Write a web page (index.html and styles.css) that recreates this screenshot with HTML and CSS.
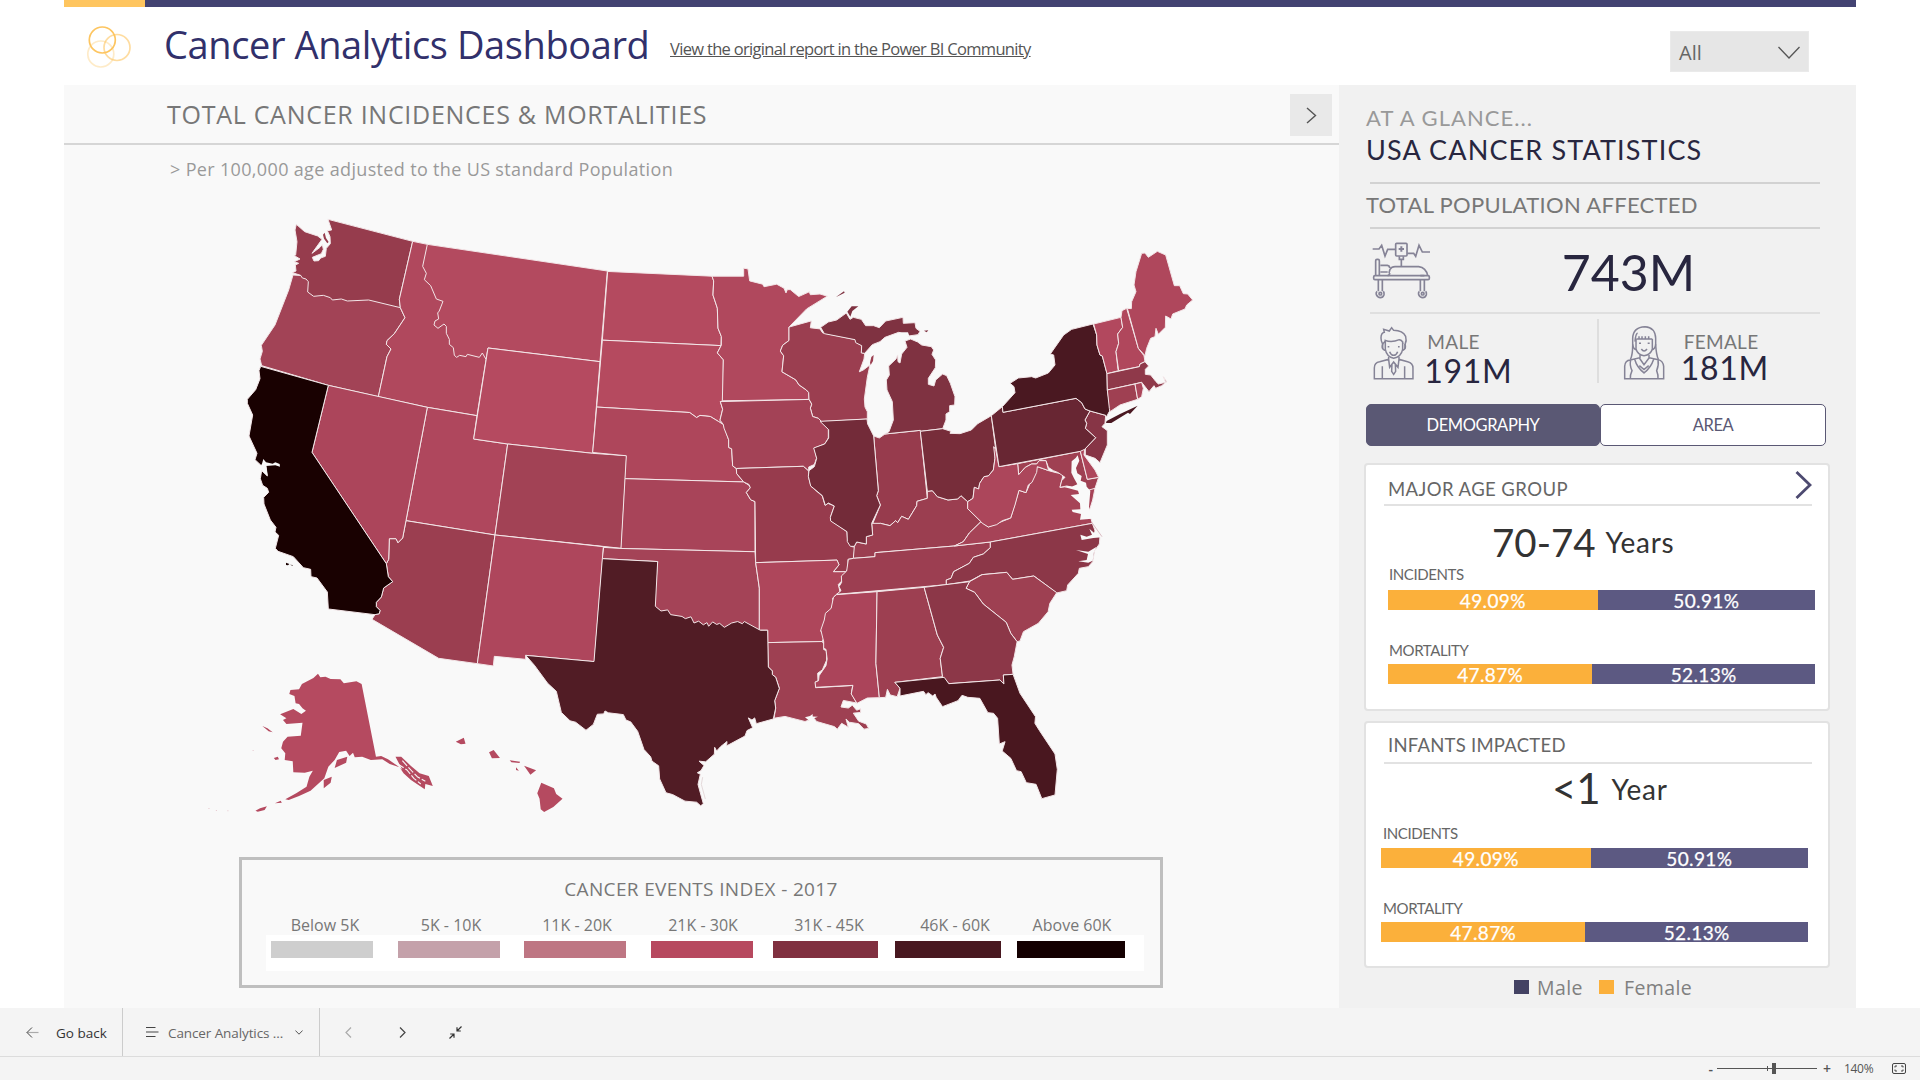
FILE: index.html
```html
<!DOCTYPE html>
<html lang="en">
<head>
<meta charset="utf-8">
<title>Cancer Analytics Dashboard</title>
<link rel="stylesheet" href="styles.css">
</head>
<body>
<div class="app">
  <div class="report">
    <div class="stripe"><span class="stripe-accent"></span></div>
    <header class="header">
      <svg class="logo" viewBox="0 0 46 58" fill="none" stroke="#fdc560" stroke-width="1.7">
        <circle cx="15.300" cy="15" r="13"/>
        <circle cx="30" cy="22.500" r="13" opacity=".6"/>
        <circle cx="13.800" cy="29" r="13" opacity=".35"/>
      </svg>
      <h1 class="title">Cancer Analytics Dashboard</h1>
      <a class="link">View the original report in the Power BI Community</a>
      <div class="select"><span>All</span>
        <svg width="22" height="13" viewBox="0 0 22 13" fill="none" stroke="#555" stroke-width="1.3"><path d="M.5 1 11 12 21.500 1"/></svg>
      </div>
    </header>
    <main class="main">
      <section class="map-panel">
        <div class="map-head">
          <h2>TOTAL CANCER INCIDENCES &amp; MORTALITIES</h2>
          <div class="next"><svg width="11" height="17" viewBox="0 0 11 17" fill="none" stroke="#555" stroke-width="1.4"><path d="M1 1 9.500 8.500 1 16"/></svg></div>
        </div>
        <p class="note">&gt; Per 100,000 age adjusted to the US standard Population</p>
        <svg class="map" viewBox="64 196 1275 650" stroke="#f3e6e8" stroke-width="1">
          <!-- west -->
          <g transform="translate(240 210) scale(.33333)">
            <path fill="#a24356" d="M159 195 240 200 470 270 481 293 495 323 463 371 441 392 439 403 453 417 441 440 415 560 265 526 65 467 60 447 67 424 64 406 105 345 146 240Z"/>
            <path fill="#963c4d" d="M264 28 518 94 478 268 481 293 386 270 322 273 304 267 277 270 271 263 250 256 221 259 203 246 205 215 198 207 187 204 182 196 157 188 168 183 166 165 176 160 163 155 180 147 163 137 167 135 171 95 165 60 169 43 194 65 233 78 246 88 216 130 240 112 247 104 250 118 244 131 217 142 222 153 236 152 242 144 256 139 259 115 271 101 270 80 262 62 275 60Z"/>
            <path fill="#963c4d" stroke="none" d="M254 68 258 84 266 96 262 100 252 86 249 74Z"/>
            <path fill="#b0485d" d="M518 94 562 103 700 200 750 430 738 450 711 617 562 592 415 560 441 440 453 417 439 403 441 392 463 371 495 323 481 293 478 268Z"/>
            <path fill="#b34a5f" d="M562 103 1102 183 1080 455 744 414 738 448 727 429 718 442 682 433 678 440 659 436 650 442 643 436 640 413 628 403 628 388 619 370 619 349 612 342 594 355 582 345 585 333 596 327 593 308 597 305 609 274 589 267 572 227 553 209 559 190 548 169Z"/>
            <path fill="#af475d" d="M562 592 711 617 701 687 803 702 765 975 498 932Z"/>
            <path fill="#b54a60" d="M744 414 1080 455 1058 730 803 702 701 687Z"/>
            <path fill="#a24255" d="M803 702 1058 730 1160 737 1144 1015 765 975Z"/>
            <path fill="#9b3e50" d="M498 932 765 975 712 1361 596 1345 396 1228 405 1214 418 1211 420 1201 409 1190 409 1177 424 1161 431 1134 458 1115 445 1100 439 1061 446 1048 448 986 468 986 474 998 488 984Z"/>
            <path fill="#ac455b" d="M265 526 562 592 498 932 488 984 474 998 468 986 448 986 446 1048 439 1061 216 727Z"/>
            <path fill="#ae465c" d="M765 975 1090 1010 1088 1045 1063 1355 857 1336 857 1348 763 1339 760 1368 712 1361Z"/>
            <path fill="#190101" d="M62 469 265 526 216 727 439 1061 445 1100 458 1115 431 1134 424 1161 409 1177 409 1190 420 1201 418 1211 405 1214 265 1197 262 1146 231 1104 213 1100 212 1078 190 1073 160 1040 114 1024 106 1015 116 976 105 966 108 952 91 930 72 882 71 862 86 847 82 835 68 826 61 806 65 782 82 798 78 768 62 765 45 749 51 730 27 678 38 615 22 580 22 568 47 539 60 506 57 482Z"/>
            <path fill="#f9f9f9" stroke="none" d="M70 747 78 757 98 761 106 757 119 762 120 770 106 766 78 768 83 797 72 785 63 772Z"/>
            <path fill="#190101" stroke="none" d="M138 1058 148 1062 144 1066 138 1065ZM150 1064 158 1065 158 1067Z"/>
          </g>
          <!-- plains and midwest -->
          <g transform="translate(590 250) scale(.33333 .36354)">
            <path fill="#b44a5f" d="M53 59 366 72 371 85 369 124 382 160 384 215 394 238 393 263 37 248Z"/>
            <path fill="#b54a5f" d="M37 248 393 263 382 283 400 302 399 415 391 417 398 438 390 468 400 480 361 458 330 455 320 461 299 447 20 432Z"/>
            <path fill="#ae465b" d="M20 432 299 447 320 461 330 455 361 458 386 472 400 480 416 522 416 543 425 547 428 594 439 601 440 615 461 638 105 629 109 566 8 557Z"/>
            <path fill="#a84459" d="M105 629 461 638 477 647 481 654 469 667 482 687 495 692 495 830 93 821Z"/>
            <path fill="#a44357" d="M41 818 93 821 495 830 497 860 508 930 508 1043 400 1080 190 1000 203 857 37 849Z"/>
            <path fill="#b0485d" d="M366 72 461 72 461 50 474 52 479 85 518 94 522 101 560 94 582 105 588 118 592 109 601 109 626 128 658 115 661 123 690 121 712 127 650 162 597 212 597 249 578 262 571 278 581 291 576 335 617 357 627 371 649 385 656 392 657 411 397 415 400 302 382 283 394 262 394 238 384 215 382 160 369 124 371 85Z"/>
            <path fill="#9b3e50" d="M597 212 664 195 661 214 690 217 698 228 799 247 800 255 816 263 814 282 824 285 822 300 808 335 820 330 840 316 832 350 823 410 825 432 832 445 832 465 695 472 685 463 668 458 661 435 665 424 657 411 656 392 649 385 627 371 617 357 576 335 581 291 571 278 578 262 597 249Z"/>
            <path fill="#9b3e50" stroke="none" d="M840 310 844 294 851 289 849 305 842 316Z"/>
            <path fill="#a34256" d="M391 417 657 411 665 424 661 435 668 458 685 463 695 472 715 493 715 517 705 533 673 545 680 572 673 590 656 597 656 608 640 595 439 601 428 594 425 547 416 543 416 522 402 490 400 480 390 468 398 438Z"/>
            <path fill="#973b4d" d="M439 601 640 595 656 608 656 625 663 650 697 677 705 702 714 697 733 704 722 733 724 745 771 775 773 799 785 816 795 817 791 848 774 851 774 875 769 885 730 885 747 866 741 853 497 860 495 692 482 687 469 667 481 654 477 645 461 638 440 615Z"/>
            <path fill="#ae465b" d="M497 860 741 853 747 866 730 885 769 885 769 888 757 895 758 908 745 920 750 940 738 948 728 958 730 970 722 990 708 998 712 1007 705 1015 703 1030 692 1048 704 1060 697 1077 533 1080 533 1046 511 1046 508 1043 508 930Z"/>
            <path fill="#9e4052" d="M533 1080 697 1077 702 1085 701 1099 709 1102 710 1128 697 1155 683 1164 684 1185 676 1188 677 1204 788 1198 784 1220 800 1246 760 1239 753 1257 775 1260 787 1252 800 1266 812 1262 812 1272 790 1274 806 1296 829 1304 836 1316 822 1318 806 1303 778 1299 768 1290 775 1313 755 1302 742 1318 733 1311 680 1297 672 1288 645 1297 585 1283 552 1288 557 1260 554 1240 568 1206 557 1175 547 1168 547 1158 535 1147Z"/>
            <path fill="#f9f9f9" stroke="none" d="M645 1285 660 1282 668 1276 668 1283 684 1284 672 1288 674 1297 655 1293Z"/>
            <path fill="#511c25" d="M37 849 203 857 196 980 213 993 233 990 242 1003 276 1008 286 1014 303 1009 312 1026 326 1021 340 1031 351 1025 356 1035 368 1023 380 1030 389 1027 403 1038 425 1026 443 1022 457 1028 463 1022 495 1038 511 1046 533 1046 535 1147 547 1158 547 1168 557 1175 568 1206 554 1240 557 1260 550 1290 499 1303 494 1287 486 1293 475 1287 488 1314 471 1322 465 1337 410 1364 411 1352 392 1366 380 1378 374 1368 373 1387 347 1408 327 1406 342 1418 333 1432 322 1438 331 1442 324 1470 340 1523 332 1529 320 1519 285 1516 248 1498 228 1493 209 1455 206 1419 186 1406 182 1394 162 1374 143 1324 122 1298 108 1293 100 1278 55 1273 45 1268 41 1276 22 1277 10 1305 -12 1321 -43 1299 -60 1295 -86 1272 -101 1214 -127 1192 -167 1142 -193 1115 12 1132Z"/>
            <path fill="none" stroke="#e5dadb" d="M338 1450 334 1470 346 1510"/>
          </g>
          <!-- northeast, great lakes and upper south -->
          <g transform="translate(770 240) scale(.33333)">
            <path fill="#7f3241" d="M152 262 175 246 200 240 229 219 240 238 250 232 274 238 287 257 311 257 328 263 347 243 399 232 400 250 435 248 438 265 450 274 444 284 416 288 386 277 345 292 330 305 307 314 284 340 274 339 275 317 257 308 255 299 163 281Z"/>
            <path fill="#7f3241" stroke="none" d="M232 215 245 199 265 199 247 213 241 230ZM198 171 222 154 224 158 203 169ZM462 272 475 271 470 277Z"/>
            <path fill="#f9f9f9" stroke="none" d="M386 277 414 277 418 288 400 290Z"/>
            <path fill="#973b4d" d="M311 588 328 594 345 582 451 571 472 775 441 784 440 797 415 838 395 829 383 848 377 842 360 857 331 850 306 856 331 795 320 767 325 752Z"/>
            <path fill="#7f3241" d="M345 582 357 575 370 540 367 485 351 450 349 420 358 405 356 378 378 357 383 345 384 365 390 369 395 342 411 322 405 303 422 297 443 306 455 315 484 320 491 330 486 343 497 360 496 383 475 415 475 433 492 438 497 420 518 402 530 407 541 430 555 470 554 495 539 497 539 515 528 522 528 540 518 566 451 574 451 571Z"/>
            <path fill="#9b3e50" d="M253 919 260 906 289 912 289 890 308 885 305 850 331 850 360 857 377 842 383 848 395 829 415 838 440 797 441 784 472 775 472 754 487 752 502 770 534 780 563 777 573 767 593 785 593 806 633 845 598 879 580 905 553 918 315 938 315 950 250 955Z"/>
            <path fill="#732b39" d="M150 544 291 537 293 552 311 588 325 752 320 767 331 795 305 850 308 885 289 890 289 912 260 906 253 919 241 919 232 905 231 875 182 843 181 832 193 798 175 789 166 796 157 767 122 738 115 709 117 692 133 680 140 655 131 624 164 612 176 594 176 569Z"/>
            <path fill="#772d3a" d="M451 574 518 566 543 574 540 580 570 581 604 570 623 551 664 527 677 628 675 655 670 690 655 708 642 710 629 730 626 747 613 742 609 775 593 785 573 767 563 777 534 780 502 770 487 752 472 754Z"/>
            <path fill="#9c3e51" d="M235 958 250 955 315 950 315 938 553 918 661 906 661 923 640 942 610 952 598 970 551 995 543 1015 529 1020 529 1034 200 1063 213 1052 207 1040 215 1027 214 1008 230 993Z"/>
            <path fill="#a64357" d="M553 918 580 905 598 879 633 845 655 861 722 834 747 751 768 758 802 680 836 692 858 698 880 702 870 742 890 740 925 745 960 745 975 745 968 780 957 815 967 850 661 906Z"/>
            <path fill="#9f4052" d="M743 671 931 634 952 718 986 712 975 745 957 750 925 745 890 738 870 742 875 722 885 712 865 698 850 692 835 682 828 662 812 660 800 672 785 672 766 682 746 704Z"/>
            <path fill="#ac465b" d="M671 620 677 628 687 680 743 671 746 704 766 682 785 672 800 672 807 662 828 662 836 692 820 686 802 680 800 697 786 727 775 735 768 758 747 751 735 795 722 834 697 842 680 854 655 861 637 850 633 845 593 806 593 785 609 775 613 742 626 747 629 730 642 710 655 708 670 690 675 655Z"/>
            <path fill="#f9f9f9" stroke="none" d="M923 646 917 654 905 664 904 698 912 715 922 733 905 740 893 738 885 742 924 752 927 762 902 765 930 790 931 808 905 809 908 816 933 822 930 839 966 836 957 800 961 752 950 740 948 728 932 722 935 708 922 700 918 684 928 662Z"/>
            <path fill="#ae465b" d="M931 634 937 627 944 628 942 645 975 690 986 712 952 718Z"/>
            <path fill="#873546" d="M960 513 1007 526 1005 550 996 560 1012 572 1012 615 990 668 975 655 946 645 946 626 977 593 946 565 950 550 945 540Z"/>
            <path fill="#682633" d="M664 527 697 500 699 517 918 475 935 488 945 507 960 513 945 540 950 550 946 565 977 593 944 628 931 634 687 680Z"/>
            <path fill="#4a1821" d="M697 500 735 458 732 440 720 430 745 414 785 410 797 414 835 399 855 375 851 345 841 342 881 285 905 268 969 252 980 285 981 315 990 345 997 348 1011 401 1012 450 1020 498 1022 508 1015 520 1010 530 1007 526 960 513 945 507 935 488 918 475 699 517Z"/>
            <path fill="#4a1821" stroke="none" d="M1010 543 1050 522 1103 497 1080 522 1074 518 1024 549 1008 549Z"/>
            <path fill="#b2485e" d="M971 252 1053 232 1058 262 1043 282 1046 310 1038 335 1044 388 1046 392 1011 401 997 348 990 345 981 315 980 285Z"/>
            <path fill="#b0475c" d="M1053 232 1056 212 1070 205 1105 325 1122 347 1125 365 1110 372 1108 380 1046 392 1038 335 1046 310 1043 282 1058 262Z"/>
            <path fill="#af475c" d="M1072 205 1084 206 1085 185 1098 155 1092 135 1098 95 1115 40 1125 39 1135 52 1162 34 1187 45 1213 137 1229 137 1240 161 1253 162 1268 180 1250 195 1245 207 1208 222 1203 237 1187 228 1186 262 1165 283 1158 265 1155 290 1142 295 1130 325 1125 347 1105 325Z"/>
            <path fill="#8f394a" d="M1011 401 1108 380 1110 372 1125 365 1136 378 1126 388 1126 403 1142 405 1158 425 1165 432 1187 427 1180 410 1190 425 1175 437 1157 445 1152 437 1137 455 1115 427 1012 450Z"/>
            <path fill="#9f4052" d="M1012 450 1095 432 1103 478 1050 495 1020 515 1018 505Z"/>
            <path fill="#ac465b" d="M1095 432 1115 427 1120 445 1115 470 1103 478Z"/>
            <path fill="#8c3748" d="M661 906 967 850 978 880 990 890 988 912 974 932 968 965 955 980 928 985 925 1000 893 1035 890 1052 860 1059 792 1008 728 1018 710 997 635 1004 600 1023 529 1034 529 1020 543 1015 551 995 598 970 610 952 640 942 661 923Z"/>
            <path fill="#f9f9f9" stroke="none" d="M931 884 950 890 966 884 958 866 972 878 978 862 996 892 970 894 935 900ZM918 930 955 935 980 920 972 936 968 962 955 968 925 964 950 960 954 942Z"/>
            <path fill="none" stroke="#dbbcc3" d="M966 848 996 890"/>
          </g>
          <!-- deep south, alaska and hawaii -->
          <g transform="translate(190 560) scale(.57399 .33333)">
            <path fill="#ab445a" d="M1126 104 1197 95 1195 310 1201 413 1180 414 1162 430 1152 402 1155 376 1090 382 1089 367 1095 362 1096 347 1108 317 1110 297 1108 268 1104 265 1104 245 1099 210 1105 180 1107 160 1117 145 1121 112Z"/>
            <path fill="#9d3f51" d="M1197 95 1279 82 1302 225 1313 262 1307 295 1311 350 1228 367 1237 385 1232 410 1220 405 1215 388 1212 412 1201 413 1195 310Z"/>
            <path fill="#9e4052" d="M1358 65 1380 44 1423 37 1433 58 1470 48 1510 98 1498 130 1495 155 1478 190 1452 215 1446 243 1441 245 1430 220 1422 187 1382 132 1367 97 1352 85Z"/>
            <path fill="#8c3748" d="M1279 82 1358 65 1352 85 1367 97 1382 132 1422 187 1430 220 1441 245 1436 290 1432 315 1434 343 1417 345 1418 372 1411 360 1322 371 1311 350 1307 295 1313 262 1302 225Z"/>
            <path fill="#49171f" d="M1228 367 1314 352 1322 371 1411 360 1418 372 1417 345 1434 343 1446 400 1473 470 1472 490 1480 512 1507 582 1511 628 1507 705 1484 716 1474 673 1457 668 1448 635 1440 632 1430 595 1415 573 1420 545 1410 552 1407 475 1400 460 1390 458 1376 415 1355 412 1345 406 1338 422 1311 440 1300 412 1298 402 1294 408 1286 398 1282 404 1278 394 1237 408 1237 385Z"/>
            <g fill="#b54a60" stroke="none">
              <path d="M223 341 227 352 236 350 245 357 262 358 268 370 290 364 299 372 324 590 333 588 345 598 362 618 370 630 358 590 368 590 385 618 400 640 416 648 423 678 410 672 409 688 385 660 372 640 365 622 348 612 335 598 315 600 300 590 287 592 284 578 278 588 272 572 260 576 252 600 241 620 234 655 210 692 190 708 172 720 166 718 185 700 203 680 208 650 214 632 200 638 180 637 179 604 165 600 166 580 159 565 162 545 170 530 193 527 196 488 168 492 162 480 168 475 157 463 180 447 194 462 202 452 196 445 190 432 184 430 182 408 173 402 175 390 190 388 195 372 215 354Z"/>
              <path d="M274 590 272 608 252 624 256 600ZM233 660 247 650 245 668 233 685ZM126 498 135 505 144 517 137 514ZM146 594 153 590 155 598 149 600ZM148 730 158 722 160 728ZM114 752 122 745 134 739 130 750 118 755Z"/>
              <path d="M463 545 477 533 480 551 472 553ZM521 577 529 570 540 594 526 595ZM557 601 575 605 574 609 560 607ZM568 622 573 632 568 630ZM582 617 603 631 593 644ZM612 668 634 685 638 702 649 716 633 741 617 756 611 748 609 716 605 700Z"/>
              <path fill="#e9cdd3" d="M32 744h2v3h-2ZM45 750h2v3h-2ZM65 751h2v3h-2ZM109 570h2v3h-2Z"/>
            </g>
            <path fill="none" stroke="#f9f9f9" stroke-width="1.100" stroke-dasharray="7 2" d="M362 612 378 630 390 655 402 672M370 602 388 636 396 650 410 664"/>
          </g>
        </svg>
        <div class="index">
          <h3>CANCER EVENTS INDEX - 2017</h3>
          <div class="index-labels"><span>Below 5K</span><span>5K - 10K</span><span>11K - 20K</span><span>21K - 30K</span><span>31K - 45K</span><span>46K - 60K</span><span>Above 60K</span></div>
          <div class="index-strip"><i class="s1"></i><i class="s2"></i><i class="s3"></i><i class="s4"></i><i class="s5"></i><i class="s6"></i><i class="s7"></i></div>
        </div>
      </section>
      <aside class="side">
        <div class="glance">AT A GLANCE...</div>
        <div class="stats-title">USA CANCER STATISTICS</div>
        <div class="rule"></div>
        <div class="affected">TOTAL POPULATION AFFECTED</div>
        <div class="rule"></div>
        <div class="total">
          <svg class="bed" viewBox="65 50 176 170" fill="none" stroke="#858396" stroke-width="5">
            <path d="M67 71H86L94 60 104 92 112 72H135M171 84H190L196 93 206 60 216 80H239"/>
            <rect x="136" y="54" width="34" height="38" rx="3"/><path d="M153 63V79M145 71H161" stroke-width="6"/>
            <path d="M147 93V102H159V93M153 102V124"/>
            <path d="M76 150V106Q76 102 80 102H83Q87 102 87 106V150"/>
            <path d="M90 120H111Q118 121 118 128M90 140H112M116 143 119 132Q124 124 134 124H205Q227 127 232 151"/>
            <rect x="70" y="151" width="167" height="12" rx="4"/><path d="M118 143Q118 150 112 151M210 151H222" />
            <path d="M84 163V198M96 163V198M210 163V198M222 163V198"/>
            <path d="M80 198Q76 202 78 208 82 217 90 217 98 217 101 208 102 202 99 198M207 198Q203 202 205 208 209 217 217 217 225 217 228 208 229 202 226 198"/><circle cx="90" cy="205" r="4"/><circle cx="217" cy="205" r="4"/>
          </svg>
          <strong>743M</strong>
        </div>
        <div class="rule light"></div>
        <div class="split">
          <div class="person male">
            <svg class="man" viewBox="70 304 124 162" fill="none" stroke="#858396" stroke-width="4.500">
              <path d="M99 372V358Q94 350 94 340 94 325 104 323L102 314 119 319 126 309 132 317Q160 318 168 335 172 348 166 360V372"/>
              <path d="M99 358Q107 350 107 347 125 355 149 345 160 347 160 358M107 350V374Q111 396 132 401 155 396 159 374V350M99 358Q94 372 105 377M166 358Q171 372 160 377M120 381Q124 392 132 392 140 392 144 381M114 366H119M145 366H150"/>
              <path d="M117 396V404L90 411Q74 413 74 430V462H190V430Q190 415 174 411L148 404V396M98 425V462M165 425V462M117 404 120 428 132 412 145 428 148 404M127 418 126 440 132 449 138 440 137 418"/>
            </svg>
            <div><span>MALE</span><b>191M</b></div>
          </div>
          <div class="person female">
            <svg class="woman" viewBox="820 300 128 166" fill="none" stroke="#858396" stroke-width="4.500">
              <path d="M849 360V340Q850 306 886 305 917 307 918 340V360Q920 390 926 403M849 360Q849 390 842 404M856 350Q858 325 864 325M860 342H908M868 334V342M877 334V342M887 334V342M897 334V342"/>
              <path d="M859 342V372Q864 390 883 392 903 390 908 372V342M849 358Q850 372 860 375M918 358Q917 372 907 375M868 355H874M894 355H900M875 372Q883 384 892 372"/>
              <path d="M871 390V398L842 405Q826 406 825 424V461H942V424Q940 408 926 404L898 398V390M843 405Q839 420 847 437 841 450 842 461M925 404Q928 422 921 437 926 450 925 461M855 403Q862 428 883 444 904 428 912 403M869 399 883 419 898 399M869 422 883 434 897 422"/>
            </svg>
            <div><span>FEMALE</span><b>181M</b></div>
          </div>
        </div>
        <div class="tabs"><div class="tab active">DEMOGRAPHY</div><div class="tab">AREA</div></div>
        <section class="card age">
          <div class="card-head"><h4>MAJOR AGE GROUP</h4><svg width="17" height="28" viewBox="0 0 17 28" fill="none" stroke="#4d4a70" stroke-width="2.800"><path d="M1.500 1 15 14 1.500 27"/></svg></div>
          <p class="big">70-74 <small>Years</small></p>
          <div class="label inc">INCIDENTS</div>
          <div class="bar"><span class="f" style="width:49.09%">49.09%</span><span class="m">50.91%</span></div>
          <div class="label mor">MORTALITY</div>
          <div class="bar"><span class="f" style="width:47.87%">47.87%</span><span class="m">52.13%</span></div>
        </section>
        <section class="card infants">
          <div class="card-head"><h4>INFANTS IMPACTED</h4></div>
          <p class="big">&lt;1 <small>Year</small></p>
          <div class="label inc">INCIDENTS</div>
          <div class="bar"><span class="f" style="width:49.09%">49.09%</span><span class="m">50.91%</span></div>
          <div class="label mor">MORTALITY</div>
          <div class="bar"><span class="f" style="width:47.87%">47.87%</span><span class="m">52.13%</span></div>
        </section>
        <div class="legend"><i class="lm"></i><span class="tm">Male</span><i class="lf"></i><span class="tf">Female</span></div>
      </aside>
    </main>
  </div>
  <nav class="nav">
    <div class="back"><svg width="13" height="11" viewBox="0 0 13 11" fill="none" stroke="#444"><path d="M.7 5.500H12.500" stroke="#aaa" stroke-width="1.200"/><path d="M6 .5 1 5.500 6 10.500"/></svg><span>Go back</span></div>
    <div class="page"><svg width="13" height="10" viewBox="0 0 13 10" stroke="#444"><path d="M0 .5H9.500M0 5H12.500M0 9.500H9.500"/></svg><span>Cancer Analytics ...</span><svg class="caret" width="8" height="5" viewBox="0 0 8 5" fill="none" stroke="#555"><path d="M.4 .5 4 4.200 7.600 .5"/></svg></div>
    <div class="pager">
      <svg width="7" height="11" viewBox="0 0 7 11" fill="none" stroke="#aaa" stroke-width="1.200"><path d="M6 .5 1 5.500 6 10.500"/></svg>
      <svg width="7" height="11" viewBox="0 0 7 11" fill="none" stroke="#444" stroke-width="1.200"><path d="M1 .5 6 5.500 1 10.500"/></svg>
      <svg width="13" height="13" viewBox="0 0 13 13" fill="none" stroke="#333" stroke-width="1.200"><path d="M12.500 .5 8 5M8 1.200V5H11.800M.5 12.500 5 8M1.200 8H5V11.800"/></svg>
    </div>
  </nav>
  <footer class="status">
    <span class="sign">-</span><div class="slider"><i class="tick"></i><i class="thumb"></i></div><span class="sign plus">+</span><span class="pct">140%</span>
    <svg width="14" height="11" viewBox="0 0 14 11" fill="none" stroke="#444"><rect x=".5" y=".5" width="13" height="10" rx="1.500"/><path d="M3 4.500V3H5M9 3H11V4.500M11 6.500V8H9M5 8H3V6.500"/></svg>
  </footer>
</div>
</body>
</html>
```
FILE: styles.css
```css
* { box-sizing: border-box; margin: 0; padding: 0; }
body { width: 1920px; height: 1080px; overflow: hidden; background: #fff; font-family: "Open Sans", "Noto Sans", sans-serif; color: #777; }
h1, h2, h3, h4, b, strong { font-weight: 400; }
svg { display: block; flex: none; }
.app { display: flex; flex-direction: column; height: 1080px; }
.report { width: 1792px; height: 1008px; margin-left: 64px; }
.stripe { height: 7px; background: #434372; }
.stripe-accent { display: block; width: 81px; height: 7px; background: #fec55f; }
.header { height: 78px; display: flex; align-items: flex-start; }
.logo { width: 46px; height: 58px; margin: 18px 0 0 23px; }
.title { width: 506px; margin: 12px 0 0 31px; font-size: 38px; line-height: 50px; letter-spacing: -.4px; color: #31306b; white-space: nowrap; }
.link { margin-top: 30px; font-size: 16.5px; line-height: 24px; letter-spacing: -.68px; color: #555; text-decoration: underline; white-space: nowrap; }
.select { width: 139px; height: 41px; margin: 24px 47px 0 auto; padding: 2px 8px 0; display: flex; align-items: center; justify-content: space-between; background: #e6e6e6; border: 1px solid #eaeaea; font-size: 20px; color: #666; }
.main { display: flex; height: 923px; }

.map-panel { width: 1275px; background: #f9f9f9; }
.map-head { display: flex; justify-content: space-between; height: 60px; padding: 9px 7px 0 103px; border-bottom: 2px solid #d6d6d6; }
.map-head h2 { font-size: 25px; line-height: 40px; letter-spacing: .72px; color: #777; white-space: nowrap; }
.next { width: 42px; height: 42px; background: #e9e9e9; display: flex; align-items: center; justify-content: center; }
.note { height: 51px; padding-left: 106px; font-size: 18px; line-height: 49px; letter-spacing: .34px; color: #999; white-space: nowrap; }
.map { width: 1275px; height: 650px; }
.map path { vector-effect: non-scaling-stroke; stroke-linejoin: round; }
.index { width: 924px; height: 131px; margin: 11px 0 0 175px; border: 3px solid #bfbfbf; }
.index h3 { margin-top: 17px; font-size: 19px; line-height: 24px; letter-spacing: .35px; text-align: center; color: #777; }
.index-labels { display: grid; grid-template-columns: repeat(6, 126px) 108px; margin: 14px 0 0 20px; font-size: 16px; line-height: 20px; text-align: center; white-space: nowrap; color: #777; }
.index-strip { display: grid; grid-template-columns: 102px 102px 102px 102px 105px 106px 108px; column-gap: 24.500px; width: 878px; height: 36px; margin: 0 0 0 24px; padding: 6px 0 0 5px; background: #fff; }
.index-strip i { height: 17px; }
.s1 { background: #cecece; } .s2 { background: #c4a1aa; } .s3 { background: #be7683; } .s4 { background: #b7495f; }
.s5 { background: #803040; margin-left: -4px; margin-right: 4px; } .s6 { background: #481820; margin-left: -12px; margin-right: 12px; } .s7 { background: #140001; margin-left: -20px; margin-right: 20px; }

.side { width: 517px; padding: 19px 26px 0 27px; background: #f1f1f1; font-family: Lato, sans-serif; }
.glance { font-size: 22px; line-height: 27px; color: #999; letter-spacing: 1.05px; white-space: nowrap; }
.stats-title { font-size: 27px; line-height: 38px; letter-spacing: 1.15px; color: #28263f; white-space: nowrap; }
.rule { height: 2px; width: 450px; margin-left: 4px; background: #d2d2d2; }
.stats-title + .rule { margin-top: 13px; }
.rule.light { background: #dfdfdf; }
.affected { height: 43px; font-size: 22px; line-height: 41px; letter-spacing: .3px; white-space: nowrap; }
.total { display: flex; height: 83px; }
.bed { width: 58.700px; height: 56.700px; margin: 13px 0 0 6px; }
.total strong { margin-left: 131px; font-size: 50px; line-height: 86px; color: #28263f; }
.split { display: flex; height: 90px; }
.person { display: flex; align-items: flex-start; }
.male { width: 233px; height: 64px; margin-top: 5px; border-right: 2px solid #dedede; }
.man { width: 41.300px; height: 54px; margin: 7px 12px 0 7px; }
.female { margin-top: 5px; }
.woman { width: 42.700px; height: 55.300px; margin: 6px 17px 0 24px; }
.person span { display: block; margin: 12px 0 0 1px; font-size: 19px; line-height: 22px; letter-spacing: .3px; }
.person b { display: block; font-size: 32px; line-height: 34px; margin: 1px 0 0 -2px; letter-spacing: .7px; color: #28263f; }
.female b { margin-top: -2px; }
.tabs { display: flex; height: 42px; width: 460px; }
.tab { width: 226px; border: 1px solid #5a5874; border-radius: 5px; background: #fff; font-size: 16.500px; line-height: 41px; letter-spacing: -.4px; text-align: center; color: #5a5874; }
.tab.active { width: 234px; background: #5a5874; color: #fff; }
.card { width: 466px; height: 248px; margin: 17px 0 0 -2px; border: 2px solid #e2e2e2; border-radius: 4px; background: #fff; color: #666; }
.infants { height: 247px; margin-top: 10px; }
.card-head { display: flex; justify-content: space-between; width: 428px; height: 41px; margin-left: 18px; padding: 6px 0 0 4px; border-bottom: 2px solid #e2e2e2; }
.card h4 { font-size: 18.500px; line-height: 37px; letter-spacing: .42px; white-space: nowrap; }
.infants .card-head { padding-top: 4px; }
.infants h4 { letter-spacing: .25px; }
.big { height: 55px; padding-left: 126px; font-size: 38.500px; line-height: 73px; color: #333; white-space: nowrap; }
.big small { font-size: 28px; letter-spacing: .7px; position: relative; top: -4px; }
.label { padding-left: 23px; font-size: 15px; line-height: 24px; letter-spacing: -.4px; }
.bar { display: flex; width: 427px; height: 20px; margin-left: 22px; font-size: 19px; line-height: 22px; letter-spacing: .35px; text-align: center; color: #fff; -webkit-text-stroke: .25px #fff; }
.inc { height: 28px; margin-top: 1px; }
.mor { height: 26px; margin-top: 28px; }
.bar .f { background: #fbb03b; }
.bar .m { flex: 1; background: #5c5982; }
.infants .big { padding-left: 186px; font-size: 42px; line-height: 48px; }
.infants .inc { height: 27px; margin-top: 2px; }
.infants .label { padding-left: 17px; }
.infants .bar { margin-left: 15px; }
.legend { display: flex; align-items: center; height: 38px; margin-left: 148px; font-family: "Open Sans", sans-serif; font-size: 19.500px; letter-spacing: .4px; color: #808080; }
.legend i { width: 15px; height: 14px; }
.lm { background: #434263; } .lf { background: #fbb03b; }
.tm { width: 62px; margin-left: 8px; } .tf { margin-left: 10px; }

.nav { display: flex; height: 49px; background: #f4f4f4; border-bottom: 1px solid #dcdcdc; font-size: 13.500px; color: #333; }
.nav > div { display: flex; align-items: center; }
.nav span { padding-top: 2px; }
.back { width: 123px; padding-left: 26px; gap: 17px; border-right: 1px solid #ccc; }
.page { width: 197px; padding-left: 23px; gap: 9px; border-right: 1px solid #ccc; color: #666; white-space: nowrap; letter-spacing: -.1px; }
.caret { margin-left: 3px; }
.pager { padding-left: 25px; gap: 47px; }
.pager svg:last-child { margin-left: -4px; }
.status { display: flex; align-items: center; justify-content: flex-end; height: 23px; padding-right: 14px; background: #f4f4f4; font-size: 12px; color: #555; }
.slider { width: 100px; height: 11px; margin: 0 6px 0 4px; display: flex; gap: 4px; padding-left: 50px; background: linear-gradient(#555, #555) 0 5px / 100% 1px no-repeat; }
.tick { width: 1px; height: 5px; margin-top: 3px; background: #555; }
.thumb { width: 4px; height: 11px; background: #555; }
.sign { font-size: 14px; font-weight: 600; }
.plus { margin-right: 13px; }
.pct { width: 48px; letter-spacing: -.3px; }
```
